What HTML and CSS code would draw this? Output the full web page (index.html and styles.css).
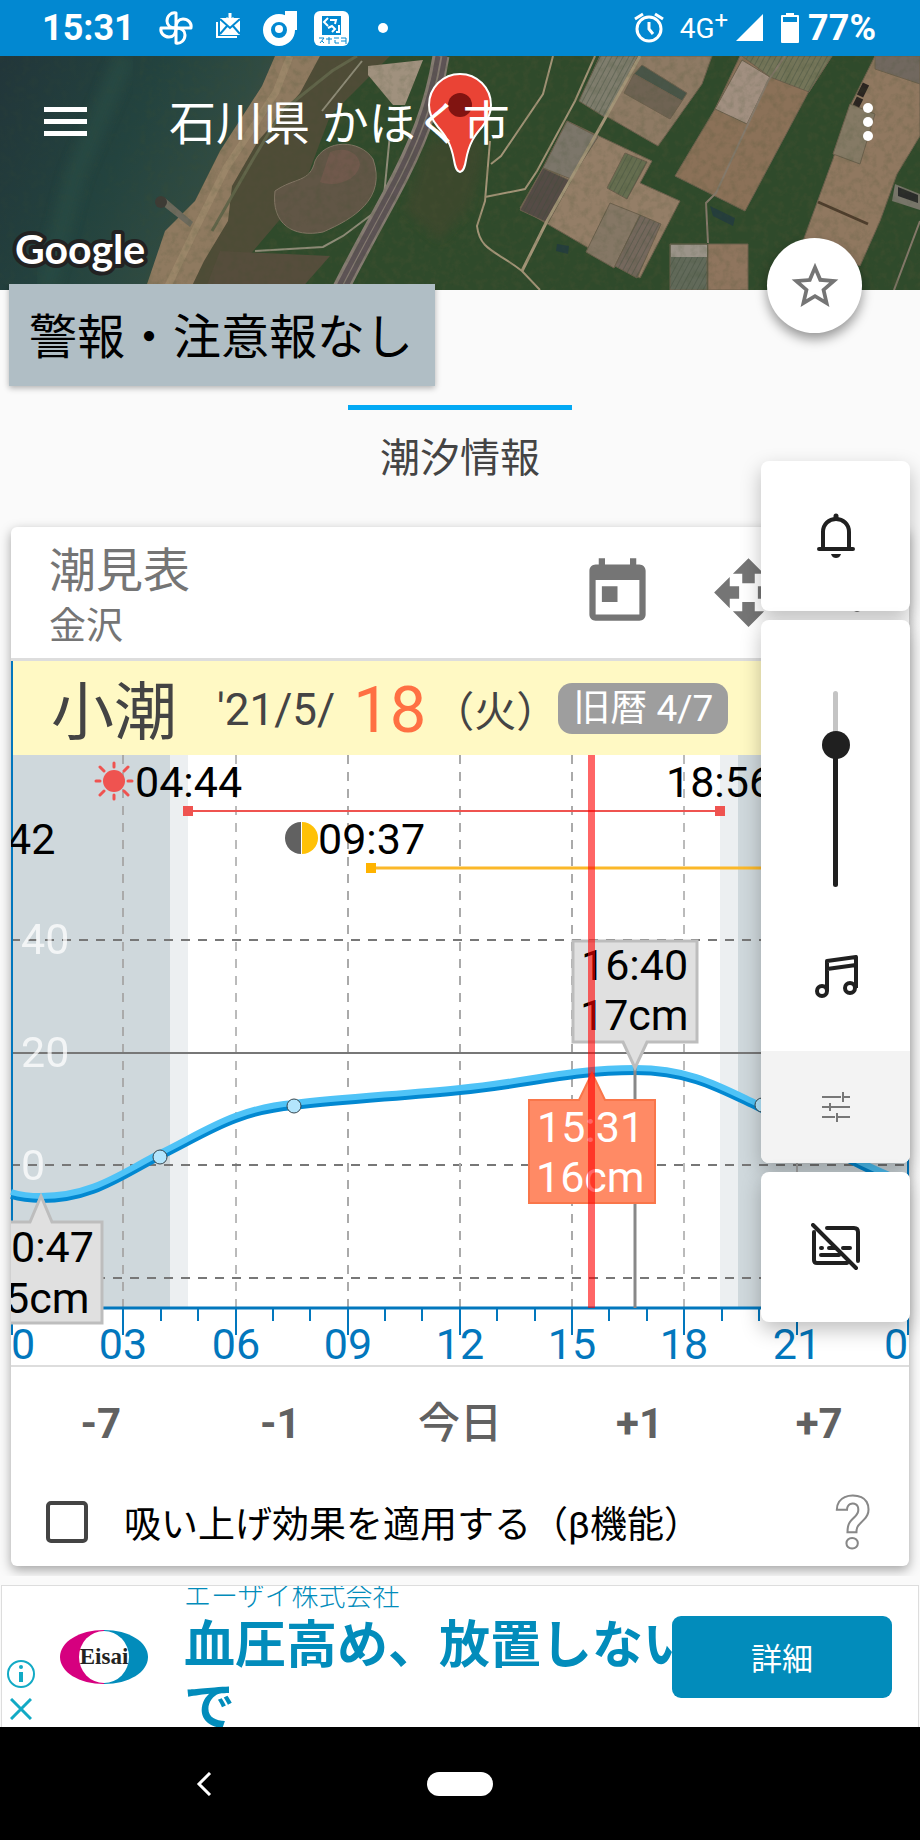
FILE: index.html
```html
<!DOCTYPE html>
<html lang="ja">
<head>
    <meta charset="UTF-8">
    <meta name="viewport" content="width=device-width, initial-scale=1.0">
    <title>潮汐情報</title>
    <link rel="stylesheet" href="styles.css">
</head>
<body>
    <div class="status-bar">
        <span class="clock">15:31</span>
        <svg class="status-apps" width="246" height="40" viewBox="0 0 246 40" fill="none" stroke="#fff">
            <!-- pinwheel -->
            <g stroke-width="3" stroke-linejoin="round">
                <path id="petal" d="M24 20V5c-5-1-9 3-9 8 0 4 3 7 9 7z"/>
                <use href="#petal" transform="rotate(90 24 20)"/>
                <use href="#petal" transform="rotate(180 24 20)"/>
                <use href="#petal" transform="rotate(270 24 20)"/>
            </g>
            <!-- mail -->
            <path d="M68 10h20v17H68z" fill="#fff" stroke="none"/>
            <path d="M65 14v15h20" stroke-width="2"/>
            <path d="M68 11l10 9 10-9M68 26l7-8M88 26l-7-8" stroke="#0288d1" stroke-width="2"/>
            <path d="M78 5v8M74 10l4 4 4-4" stroke-width="3"/>
            <!-- d -->
            <circle cx="127" cy="22" r="12" stroke-width="8"/>
            <path d="M133 3h12v19h-7c0-5-5-6-5-9z" fill="#fff" stroke="none"/>
            <circle cx="127" cy="21" r="4" fill="#fff" stroke="none"/>
            <!-- pharmacy -->
            <rect x="162" y="3" width="35" height="35" rx="6" fill="#fff" stroke="none"/>
            <path d="M170 8h19v19h-19z" fill="#0288d1" stroke="none"/>
            <path d="M176 10l-4 4 4 4M178 12h6l-1 4M176 20l4-2 3 3-3 3M187 17v7h-3" stroke-width="2"/>
            <path d="M167 30h5l-4 5M172 35l-2-2M174 31h6M177 29v7M182 30h5M183 32v3h4M189 30h5v6M189 33h5" stroke="#0288d1" stroke-width="1"/>
            <circle cx="231" cy="20" r="5" fill="#fff" stroke="none"/>
        </svg>
        <div class="status-right">
            <svg width="30" height="32" viewBox="0 0 30 32" fill="none" stroke="#fff">
                <circle cx="15" cy="17" r="12" stroke-width="3"/>
                <path d="M15 10v7l4 5" stroke-width="3"/>
                <path d="M1 7l8-5M29 7l-8-5" stroke-width="3"/>
            </svg>
            <span class="network">4G<sup>+</sup></span>
            <svg width="28" height="28" viewBox="0 0 28 28"><path d="M0 27L27 0v27z" fill="#fff"/></svg>
            <svg class="battery" width="20" height="30" viewBox="0 0 20 30">
                <path d="M6 0h8v2h4a1 1 0 0 1 1 1v26a1 1 0 0 1-1 1H2a1 1 0 0 1-1-1V3a1 1 0 0 1 1-1h4z" fill="#fff"/>
                <path d="M3 4h14v5H3z" fill="#0288d1"/>
            </svg>
            <span class="percent">77%</span>
        </div>
    </div>

    <header class="map">
        <svg class="map-image" viewBox="0 0 920 234" preserveAspectRatio="xMidYMid slice">
            <defs>
                <linearGradient id="sea" x1="0" y1="0" x2="1" y2="0.4">
                    <stop offset="0" stop-color="#22363a"/>
                    <stop offset="0.5" stop-color="#23433f"/>
                    <stop offset="0.8" stop-color="#304b42"/>
                    <stop offset="1" stop-color="#4a5040"/>
                </linearGradient>
                <pattern id="rows" width="5" height="5" patternUnits="userSpaceOnUse" patternTransform="rotate(28)">
                    <path d="M0 0v5" stroke="#3d4a3a" stroke-width="2" opacity="0.4"/>
                </pattern>
                <filter id="grain" x="0" y="0" width="100%" height="100%">
                    <feTurbulence type="fractalNoise" baseFrequency="0.13" numOctaves="4" seed="4"/>
                    <feColorMatrix values="0 0 0 0 0.05  0 0 0 0 0.08  0 0 0 0 0.03  1.8 0 0 0 -0.75"/>
                </filter>
                <filter id="haze"><feGaussianBlur stdDeviation="5"/></filter>
            </defs>
            <rect width="920" height="234" fill="#2f4a2b"/>
            <rect x="220" width="700" height="234" filter="url(#grain)" opacity="0.7"/>
            <!-- sea and beach -->
            <path d="M0 0h285l-65 95-30 60-45 79H0z" fill="url(#sea)"/>
            <path d="M125 0L75 120 45 234" fill="none" stroke="#2a5046" stroke-width="22" opacity="0.5" filter="url(#haze)"/>
            <path d="M320 0h70l-60 60-30 80-80 94h-30l30-100z" fill="#4f4c37"/>
            <path d="M275 0h45l-20 37-42 48-26 45-4 35-24 40-14 29h-45l20-59 30-30 25-50 42-65z" fill="#8f7a60"/>
            <path d="M290 0l-14 36-50 76-30 60-30 62" fill="none" stroke="#a48d70" stroke-width="7" opacity="0.6"/>
            <path d="M157 145l8-3 28 24-3 5z" fill="#6d6a5d"/>
            <circle cx="161" cy="146" r="6" fill="#3d3b35"/>
            <!-- park -->
            <path d="M275 135c20-14 35-8 40-30 10-22 45-22 58-2 14 40-20 60-50 73-30 6-52-8-48-41z" fill="#615646" stroke="#817563" stroke-width="1"/>
            <path d="M330 96c15-6 28 0 30 12-2 16-24 24-40 18z" fill="#70594c"/>
            <path d="M212 175l40-70 30-50 50-40 25-15" fill="none" stroke="#62654a" stroke-width="3"/>
            <path d="M220 195l110 5-30 34h-95z" fill="#564d3c"/>
            <path d="M368 10l55-6-8 20-10 25-12 0-25-30z" fill="#a0917e"/>
            <path d="M322 55l40-50M390 78l-7 72-40 30-20 11-68 4" fill="none" stroke="#8f8c78" stroke-width="2"/>
            <!-- highway -->
            <path d="M441 0c-8 50-24 90-51 140s-36 66-50 94" fill="none" stroke="#867c72" stroke-width="17"/>
            <path d="M438 0c-8 50-24 90-51 140s-36 66-50 94M445 0c-8 50-24 90-51 140s-36 66-50 94" fill="none" stroke="#5d5355" stroke-width="5"/>
            <path d="M425 90l45-20 15 30-15 50-30 35-35-30z" fill="#47462f" opacity="0.5" filter="url(#haze)"/>
            <!-- fields -->
            <g stroke="#6c604d" stroke-width="1">
                <path d="M600 0h112l-10 28-44 62-78-45z" fill="#8e7a64"/>
                <path d="M600 0h38l-32 62-27-17z" fill="#7f7d6d"/>
                <path d="M642 9l45 28-5 8-48-27z" fill="#495548"/>
                <path d="M634 18l48 27-12 18-46-26z" fill="#6f6353"/>
                <path d="M567 65l85 40-12 22 40 18-40 77-120-70 23-40z" fill="#947e67"/>
                <path d="M567 65l31 16-27 42-28-11z" fill="#7c766a"/>
                <path d="M543 112l28 13-23 42-28-13z" fill="#554b46"/>
                <path d="M625 97l22 9-20 37-20-11z" fill="#666e50"/>
                <path d="M610 147l30 12-26 53-28-16z" fill="#857765"/>
                <path d="M640 159l21 9-24 54-22-12z" fill="#75685d"/>
                <path d="M740 0h92l-24 37-63 118-70-35 40-67z" fill="#8b7158"/>
                <path d="M742 4l28 17-23 47-32-15z" fill="#a18f80"/>
                <path d="M742 0h90l-23 36-39-15z" fill="#747559"/>
                <path d="M875 0h45v80l-23 38-17 47-20 45-57-25 30-82 17-53z" fill="#907860"/>
                <path d="M875 0h45v28l-45-15z" fill="#71685f"/>
                <path d="M850 48l25 10-15 50-27-10z" fill="#857a65"/>
                <path d="M670 188h37v46h-37z" fill="#626a5a"/>
                <path d="M671 189h36v12h-36z" fill="#9b9489" stroke="none"/>
                <path d="M708 188h40v46h-40z" fill="#8f755e"/>
            </g>
            <path d="M600 0h38l-32 62-27-17zM543 112l28 13-23 42-28-13zM625 97l22 9-20 37-20-11zM742 0h90l-23 36-39-15zM640 159l21 9-24 54-22-12zM670 201h37v33h-37z" fill="url(#rows)"/>
            <path d="M818 146l50 22" stroke="#4e3d2c" stroke-width="3"/>
            <path d="M860 40l6-12M856 50l4-8" stroke="#2a2420" stroke-width="7"/>
            <path d="M895 128l25 10v16l-28-9z" fill="#777569"/>
            <path d="M898 131l20 8v8l-20-7z" fill="#2a2b2a"/>
            <path d="M557 188l12 2-1 8-12-3zM710 150l25 12-2 8-20-10z" fill="#243d3c"/>
            <!-- farm roads -->
            <g fill="none" stroke="#a39477" stroke-width="3">
                <path d="M640 0l-42 75-51 90-25 50"/>
                <path d="M595 0l-20 45-38 70-12 18-40 8" stroke-width="2"/>
                <path d="M553 0l-10 38-42 62-10 8" stroke-width="2"/>
                <path d="M490 85l-5 60-8 25c3 25 20 25 45 45l18 19" stroke-width="2"/>
                <path d="M785 0l-17 25-52 112-10 10 2 40M920 165l-26 69" stroke="#85796a" stroke-width="2"/>
            </g>
            <rect x="140" width="780" height="234" filter="url(#grain)" opacity="0.25"/>
            <rect width="140" height="234" filter="url(#grain)" opacity="0.15"/>
            <!-- pin -->
            <path d="M460 116c-4-1-5-6-6-12-3-17-9-25-16-33-5-6-9-13-9-22a31 31 0 0 1 62 0c0 9-4 16-9 22-7 8-13 16-16 33-1 6-2 11-6 12z" fill="#ea4335" stroke="#fff" stroke-width="2"/>
            <circle cx="460" cy="49" r="12" fill="#811411"/>
            <text class="map-logo" x="15" y="208">Google</text>
        </svg>
        <div class="app-bar">
            <button class="icon-button" aria-label="メニュー">
                <svg width="43" height="30" viewBox="0 0 43 30" fill="#fff"><path d="M0 0h43v5H0zM0 12h43v5H0zM0 24h43v5H0z"/></svg>
            </button>
            <h1>石川県 かほく市</h1>
            <button class="icon-button" aria-label="その他">
                <svg width="10" height="38" viewBox="0 0 10 38" fill="#fff"><circle cx="5" cy="5" r="5"/><circle cx="5" cy="19" r="5"/><circle cx="5" cy="33" r="5"/></svg>
            </button>
        </div>
        <button class="fab" aria-label="お気に入り">
            <svg width="56" height="56" viewBox="0 0 24 24" fill="#757575"><path d="M22 9.240l-7.190-.62L12 2 9.190 8.630 2 9.240l5.460 4.730L5.820 21 12 17.270 18.180 21l-1.630-7.030L22 9.240zM12 15.400l-3.760 2.270 1-4.280-3.320-2.880 4.380-.38L12 6.100l1.710 4.040 4.380.38-3.320 2.880 1 4.280L12 15.400z"/></svg>
        </button>
    </header>

    <main>
        <div class="warning">警報・注意報なし</div>
        <nav class="tabs"><a href="#tide" class="tab">潮汐情報</a></nav>

        <section class="card" id="tide">
            <div class="card-head">
                <div class="card-title">
                    <h2>潮見表</h2>
                    <p>金沢</p>
                </div>
                <div class="card-actions">
                    <button class="icon-button" aria-label="日付">
                        <svg width="75" height="75" viewBox="0 0 24 24" fill="#757575"><path d="M19 3h-1V1h-2v2H8V1H6v2H5c-1.110 0-1.990.9-1.990 2L3 19c0 1.100.89 2 2 2h14c1.100 0 2-.9 2-2V5c0-1.100-.9-2-2-2zm0 16H5V8h14v11zM7 10h5v5H7z"/></svg>
                    </button>
                    <button class="icon-button" aria-label="移動">
                        <svg width="75" height="75" viewBox="0 0 24 24" fill="#757575"><path d="M10 9h4V6h3l-5-5-5 5h3v3zm-1 1H6V7l-5 5 5 5v-3h3v-4zm14 2l-5-5v3h-3v4h3v3l5-5zm-9 3h-4v3H7l5 5 5-5h-3v-3z"/></svg>
                    </button>
                    <button class="icon-button more" aria-label="その他">
                        <svg width="10" height="40" viewBox="0 0 10 40" fill="#757575"><circle cx="5" cy="5" r="5"/><circle cx="5" cy="20" r="5"/><circle cx="5" cy="35" r="5"/></svg>
                    </button>
                </div>
            </div>

            <div class="date-row">
                <span class="tide-name">小潮</span>
                <span class="date">'21/5/</span>
                <span class="day">18</span>
                <span class="weekday">（火）</span>
                <span class="lunar">旧暦 4/7</span>
            </div>

            <svg class="chart" viewBox="0 0 898 610">
                <clipPath id="plot"><path d="M0 0h898v610H0z"/></clipPath>
                <path d="M0 0h159v553H0zM727 0h171v553H727z" fill="#cfd8dc"/>
                <path d="M159 0h18v553h-18zM709 0h18v553h-18z" fill="#eceff1"/>
                <!-- grid -->
                <g fill="none" stroke="#777" stroke-dasharray="9 8">
                    <path d="M0 185h898M0 410h898M0 523h898" stroke-width="2"/>
                    <path d="M112 0v553M337 0v553M449 0v553M561 0v553M786 0v553" stroke="#aaa" stroke-width="2"/>
                    <path d="M225 0v553M673 0v553" stroke-width="1"/>
                </g>
                <path d="M0 298h898" stroke="#777" stroke-width="2"/>
                <g class="scale-label">
                    <text x="10" y="199">40</text>
                    <text x="10" y="312">20</text>
                    <text x="10" y="425">0</text>
                </g>

                <!-- axis -->
                <path d="M1 0v580M897 0v580" stroke="#0277bd" stroke-width="2"/>
                <path d="M0 553h898" stroke="#0277bd" stroke-width="3"/>
                <path d="M112 553v27M225 553v27M337 553v27M449 553v27M561 553v27M673 553v27M786 553v27" stroke="#0277bd" stroke-width="2"/>
                <path d="M37 553v13M75 553v13M150 553v13M187 553v13M262 553v13M299 553v13M374 553v13M411 553v13M486 553v13M524 553v13M598 553v13M636 553v13M711 553v13M748 553v13M823 553v13M860 553v13" stroke="#0277bd" stroke-width="2"/>
                <g class="hour-label">
                    <text x="12" y="604">0</text>
                    <text x="112" y="604">03</text>
                    <text x="225" y="604">06</text>
                    <text x="337" y="604">09</text>
                    <text x="449" y="604">12</text>
                    <text x="561" y="604">15</text>
                    <text x="673" y="604">18</text>
                    <text x="786" y="604">21</text>
                    <text x="885" y="604">0</text>
                </g>

                <!-- tide curve -->
                <g fill="none" stroke-width="6">
                    <path d="M0 441c10 3 20 4 30 4 52 0 81-24 119-43 45-22 75-45 134-50 50-6 106-9 166-15 65-6 110-20 175-20 55 0 85 18 123 36 42 20 72 49 151 79" stroke="#0288d1"/>
                    <path d="M0 437c10 3 20 4 30 4 52 0 81-24 119-43 45-22 75-45 134-50 50-6 106-9 166-15 65-6 110-20 175-20 55 0 85 18 123 36 42 20 72 49 151 79" stroke="#4fc3f7"/>
                </g>
                <g fill="#b3e5fc" stroke="#37474f">
                    <circle cx="149" cy="402" r="7"/>
                    <circle cx="283" cy="351" r="7"/>
                    <circle cx="751" cy="350" r="7"/>
                </g>

                <!-- sun -->
                <path d="M177 56h532" stroke="#ef5350" stroke-width="2"/>
                <path d="M172 51h10v10h-10zM704 51h10v10h-10z" fill="#ef5350"/>
                <circle cx="103" cy="26" r="11" fill="#ef5350"/>
                <path d="M103 12V8M103 40v4M89 26h-4M117 26h4M93 16l-4-4M113 16l4-4M93 36l-4 4M113 36l4 4" stroke="#ef5350" stroke-width="3" stroke-linecap="round"/>
                <text x="124" y="42">04:44</text>
                <text x="655" y="42">18:56</text>
                <!-- moon -->
                <path d="M360 113h538" stroke="#fbb829" stroke-width="3"/>
                <path d="M355 108h10v10h-10z" fill="#ffb300"/>
                <path d="M290 67a16 16 0 0 0 0 32z" fill="#616161"/>
                <path d="M291 67a16 16 0 0 1 0 32z" fill="#ffc107"/>
                <text x="307" y="99">09:37</text>

                <!-- low and high tide -->
                <path d="M624 310v243" stroke="#888" stroke-width="3"/>
                <g clip-path="url(#plot)">
                    <text x="-4" y="99">42</text>
                    <path d="M-30 467H19l11-26 11 26h50v101H-30z" fill="#e0e0e0" stroke="#bdbdbd" stroke-width="3"/>
                    <text x="0" y="507">0:47</text>
                    <text x="-6" y="558">5cm</text>
                </g>
                <path d="M562 186h124v101h-50l-12 26-12-26h-50z" fill="#e0e0e0" stroke="#bdbdbd" stroke-width="3"/>
                <text x="570" y="225">16:40</text>
                <text x="569" y="275">17cm</text>

                <!-- now -->
                <path d="M518 345h50l13-27 13 27h50v103H518z" fill="#ff8a65" stroke="#f9764a" stroke-width="2"/>
                <g fill="#fff">
                    <text x="526" y="387">15:31</text>
                    <text x="525" y="437">16cm</text>
                </g>
                <path d="M577 0h7v553h-7z" fill="#f00" fill-opacity="0.6"/>
            </svg>

            <div class="day-buttons">
                <button>-7</button>
                <button>-1</button>
                <button>今日</button>
                <button>+1</button>
                <button>+7</button>
            </div>

            <div class="option">
                <input type="checkbox" id="suction">
                <label for="suction">吸い上げ効果を適用する（β機能）</label>
                <button class="help">?</button>
            </div>
        </section>
    </main>

    <aside class="ad">
        <div class="ad-choices">
            <svg width="28" height="28" viewBox="0 0 28 28" fill="none" stroke="#12aac5"><circle cx="14" cy="14" r="13" stroke-width="2"/><path d="M14 12v10" stroke-width="4"/><circle cx="14" cy="7" r="2" fill="#12aac5" stroke="none"/></svg>
            <svg width="22" height="22" viewBox="0 0 22 22" fill="none" stroke="#12aac5" stroke-width="3"><path d="M1 1l20 20M21 1L1 21"/></svg>
        </div>
        <svg class="ad-logo" width="90" height="54" viewBox="0 0 90 54">
            <path d="M45 0C20 0 1 12 1 27s19 27 44 27z" fill="#d6007f"/>
            <path d="M45 0c25 0 44 12 44 27S70 54 45 54z" fill="#028cbb"/>
            <ellipse cx="45" cy="27" rx="25" ry="26" fill="#fff"/>
            <text x="45" y="34" text-anchor="middle">Eisai</text>
        </svg>
        <div class="ad-copy">
            <p class="ad-company">エーザイ株式会社</p>
            <p class="ad-headline">血圧高め、放置しないで</p>
        </div>
        <button class="ad-button">詳細</button>
    </aside>

    <footer class="nav-bar">
        <button class="back" aria-label="戻る">
            <svg width="16" height="24" viewBox="0 0 16 24" fill="none" stroke="#fff" stroke-width="3"><path d="M14 1L3 12l11 11"/></svg>
        </button>
        <button class="home" aria-label="ホーム"></button>
    </footer>

    <div class="volume">
        <button class="panel" aria-label="着信音">
            <svg width="38" height="46" viewBox="0 0 38 46" fill="none" stroke="#202020" stroke-width="4" stroke-linecap="round">
                <path d="M2 36h34M6 36V19c0-8 6-13 13-13s13 5 13 13v17"/>
                <path d="M19 3v2" stroke-width="5"/>
                <path d="M14 41h10c-1 3-3 4-5 4s-4-1-5-4z" fill="#202020" stroke="none"/>
            </svg>
        </button>
        <div class="panel slider">
            <input type="range" min="0" max="100" value="76" aria-label="音量">
            <svg width="44" height="44" viewBox="0 0 44 44" fill="none" stroke="#202020" stroke-width="4" stroke-linejoin="round">
                <circle cx="8" cy="36" r="5"/><circle cx="36" cy="33" r="5"/>
                <path d="M13 36V6l29-4v31M13 14l29-4"/>
            </svg>
            <button class="settings" aria-label="設定">
                <svg width="28" height="30" viewBox="0 0 28 30" fill="none" stroke="#777" stroke-width="2"><path d="M0 5h19M21 5h7M21 0v10M0 15h7M9 15h19M8 11v8M0 25h13M15 25h13M15 21v9"/></svg>
            </button>
        </div>
        <button class="panel" aria-label="字幕">
            <svg width="50" height="48" viewBox="0 0 50 48" fill="none" stroke="#202020" stroke-width="4" stroke-linecap="round">
                <path d="M16 5h27q4 0 4 4v29M3 9v28q0 3 3 3h30M2 2l43 43"/>
                <path d="M10 25h1M18 25h6M32 25h7M10 32h18"/>
            </svg>
        </button>
    </div>
</body>
</html>
```

FILE: styles.css
```css
* {
    box-sizing: border-box;
}
body {
    position: relative;
    margin: 0;
    background-color: #fafafa;
    font-family: Roboto, "Noto Sans CJK JP", sans-serif;
    color: #000;
    overflow-x: hidden;
}
h1, h2, p {
    margin: 0;
    font-weight: normal;
}
button {
    padding: 0;
    border: none;
    background: none;
    font-family: inherit;
    cursor: pointer;
}
svg {
    display: block;
}

/* status bar */
.status-bar {
    display: flex;
    align-items: center;
    height: 56px;
    padding: 0 44px 0 42px;
    background-color: #0288d1;
    color: #fff;
}
.clock, .percent {
    font-size: 36px;
    font-weight: bold;
}
.status-apps {
    margin-left: 17px;
}
.status-right {
    display: flex;
    align-items: center;
    margin-left: auto;
}
.network {
    margin: 0 8px 0 16px;
    font-size: 28px;
    white-space: nowrap;
}
.network sup {
    font-size: 24px;
    line-height: 0;
}
.battery {
    margin: 0 8px 0 16px;
}

/* map header */
.map {
    position: relative;
    height: 234px;
}
.map-image {
    width: 100%;
    height: 100%;
}
.map-logo {
    font-family: Lato, sans-serif;
    font-size: 41px;
    font-weight: bold;
    fill: #fff;
    stroke: #222;
    stroke-width: 8px;
    stroke-linejoin: round;
    paint-order: stroke;
}
.app-bar {
    position: absolute;
    top: 0;
    left: 0;
    right: 0;
    display: flex;
    align-items: center;
    height: 132px;
    padding: 0 47px 0 44px;
    color: #fff;
}
.app-bar h1 {
    flex: 1;
    margin-left: 82px;
    padding-bottom: 6px;
    font-size: 47px;
}
.fab {
    position: absolute;
    right: 58px;
    bottom: -43px;
    z-index: 3;
    display: flex;
    align-items: center;
    justify-content: center;
    width: 95px;
    height: 95px;
    border-radius: 50%;
    background-color: #fff;
    box-shadow: 0 6px 12px rgba(0, 0, 0, 0.4);
}

main {
    position: relative;
    margin-top: -6px;
    padding: 0 11px 10px;
    overflow: hidden;
}
.warning {
    width: fit-content;
    margin-left: -2px;
    padding: 16px 22px 10px 20px;
    background-color: #b0bec5;
    box-shadow: 0 2px 6px rgba(0, 0, 0, 0.3);
    font-size: 48px;
    line-height: 76px;
}
.tabs {
    display: flex;
    justify-content: center;
    margin-top: 19px;
}
.tab {
    padding: 18px 32px 14px;
    border-top: 5px solid #03a9f4;
    color: #444;
    font-size: 40px;
    line-height: 61px;
    text-decoration: none;
}

/* tide card */
.card {
    margin-top: 24px;
    padding-bottom: 3px;
    border-radius: 6px;
    background-color: #fff;
    box-shadow: 0 4px 12px rgba(0, 0, 0, 0.35);
}
.card-head {
    display: flex;
    justify-content: space-between;
    align-items: center;
    padding: 14px 47px 5px 38px;
    border-bottom: 3px solid #ddd;
    color: #757575;
}
.card-title h2 {
    font-size: 47px;
    line-height: 60px;
}
.card-title p {
    font-size: 37px;
    line-height: 52px;
}
.card-actions {
    display: flex;
    align-items: center;
    gap: 56px;
    padding-bottom: 10px;
}
.more {
    margin-left: 10px;
}
.date-row {
    display: flex;
    align-items: center;
    height: 94px;
    padding-left: 38px;
    border-left: 2px solid #0277bd;
    background-color: #fff9c4;
    color: #444;
    font-size: 42px;
    white-space: nowrap;
}
.tide-name {
    margin-right: 40px;
    padding-bottom: 4px;
    font-size: 63px;
}
.date {
    padding-top: 4px;
    font-size: 44px;
}
.day {
    margin: 0 6px 0 18px;
    padding-top: 4px;
    color: #ff7043;
    font-size: 65px;
}
.lunar {
    padding: 0 15px;
    border-radius: 14px;
    background-color: #9e9e9e;
    color: #fff;
    font-size: 37px;
    line-height: 51px;
}
.chart {
    width: 100%;
    border-bottom: 2px solid #ddd;
    font-size: 43px;
    overflow: visible;
}
.scale-label {
    fill: #fff;
    opacity: 0.75;
}
.hour-label {
    fill: #0277bd;
    text-anchor: middle;
}
.day-buttons {
    display: grid;
    grid-template-columns: repeat(5, 1fr);
}
.day-buttons button {
    height: 114px;
    color: #616161;
    font-size: 42px;
    font-weight: bold;
    line-height: 60px;
}
.day-buttons button:nth-child(3) {
    font-weight: 500;
}
.option {
    display: flex;
    align-items: center;
    height: 82px;
    padding: 0 38px 0 35px;
}
.option input {
    appearance: none;
    width: 42px;
    height: 42px;
    margin: 0;
    border: 4px solid #444;
    border-radius: 5px;
}
.option label {
    flex: 1;
    margin-left: 36px;
    font-size: 37px;
}
.help {
    padding-top: 4px;
    color: transparent;
    font-size: 72px;
    font-weight: bold;
    line-height: 72px;
    -webkit-text-stroke: 2px #888;
}

/* ad banner */
.ad {
    display: grid;
    grid-template-columns: 57px 125px 1fr 220px;
    grid-template-rows: 141px;
    align-items: center;
    height: 142px;
    margin: 9px 1px 0;
    padding-right: 26px;
    border: 1px solid #ddd;
    border-bottom: none;
    background-color: #fff;
    overflow: hidden;
    color: #028cbb;
}
.ad-choices {
    display: flex;
    flex-direction: column;
    align-items: center;
    gap: 10px;
    width: 28px;
    margin: 66px 0 0 5px;
}
.ad-logo {
    grid-column: 2;
    font-family: "Liberation Serif", serif;
    font-size: 23px;
    font-weight: bold;
    fill: #222;
}
.ad-copy {
    grid-column: 3 / 5;
    grid-row: 1;
    align-self: start;
}
.ad-company {
    margin-top: -7px;
    font-size: 27px;
    font-weight: 300;
    line-height: 36px;
}
.ad-headline {
    width: 515px;
    font-size: 51px;
    font-weight: bold;
    line-height: 62px;
}
.ad-button {
    grid-column: 4;
    grid-row: 1;
    height: 82px;
    border-radius: 9px;
    background-color: #028cbb;
    color: #fff;
    font-size: 31px;
}

/* system navigation */
.nav-bar {
    display: grid;
    grid-template-columns: 1fr auto 1fr;
    align-items: center;
    justify-items: center;
    height: 113px;
    background-color: #000;
}
.back {
    padding-right: 20px;
}
.home {
    width: 66px;
    height: 24px;
    border-radius: 12px;
    background-color: #fff;
}

/* volume overlay */
.volume {
    position: absolute;
    top: 461px;
    right: 10px;
    z-index: 3;
    display: flex;
    flex-direction: column;
    gap: 9px;
    width: 149px;
}
.panel {
    display: flex;
    flex-direction: column;
    align-items: center;
    justify-content: center;
    height: 150px;
    border-radius: 8px;
    background-color: #fff;
    box-shadow: 0 8px 20px rgba(0, 0, 0, 0.25);
}
.slider {
    justify-content: flex-start;
    height: auto;
    padding-top: 71px;
    overflow: hidden;
}
.slider input {
    appearance: none;
    writing-mode: vertical-lr;
    direction: rtl;
    width: 5px;
    height: 196px;
    margin: 0 0 68px;
    border-radius: 3px;
    background: linear-gradient(#c4c4c4 28%, #202020 28%);
}
.slider input::-webkit-slider-thumb {
    appearance: none;
    width: 28px;
    height: 28px;
    border-radius: 50%;
    background-color: #202020;
}
.settings {
    display: flex;
    align-items: center;
    justify-content: center;
    width: 100%;
    height: 112px;
    margin-top: 52px;
    background-color: #f3f3f3;
}
```
